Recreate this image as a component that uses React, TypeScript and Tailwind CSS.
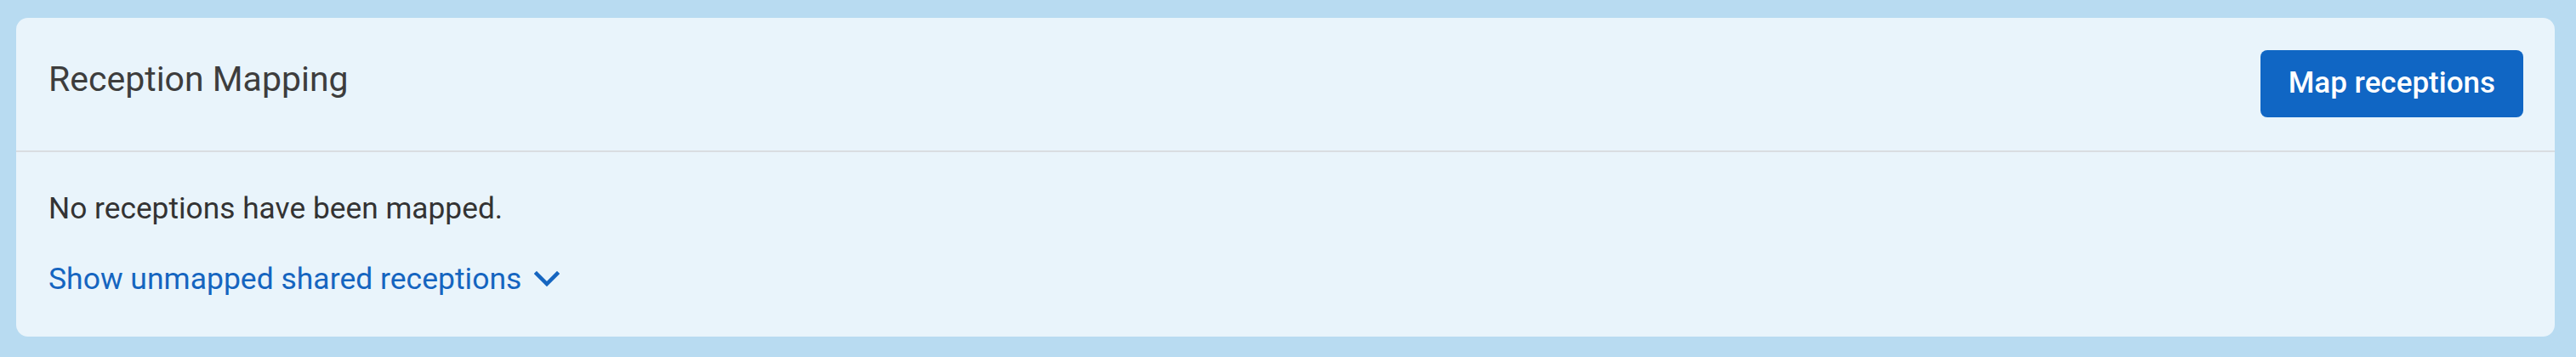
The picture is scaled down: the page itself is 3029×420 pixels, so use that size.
import React from "react";

export default function App() {
  return (
    <div
      className="h-[420px] bg-[#b8dbf1] pl-[19px] pr-[25px] pt-[21px] pb-[24px]"
      style={{ fontFamily: "Roboto, 'Noto Sans', sans-serif" }}
    >
      <div className="flex h-full flex-col rounded-[14px] bg-[#e9f4fb]">
        <div className="flex items-start justify-between border-b-2 border-[#d9dde1] pl-[38px] pr-[37px] pt-[38px] pb-[39px]">
          <h2 className="text-[41px] leading-[68px] font-normal text-[#3d3d3d]">
            Reception Mapping
          </h2>
          <button className="h-[79px] rounded-[8px] bg-[#1066c4] px-[33px] text-[35px] font-medium text-white">
            Map receptions
          </button>
        </div>
        <div className="flex flex-col items-start px-[38px] pt-[42px]">
          <p className="text-[35.3px] leading-[48px] text-[#333333]">
            No receptions have been mapped.
          </p>
          <button className="mt-[35px] flex items-center gap-[15px] text-[35.5px] leading-[48px] text-[#1565c0]">
            <span>Show unmapped shared receptions</span>
            <svg width="30" height="18" viewBox="0 0 30 18" fill="none">
              <polyline
                points="3,3 15,15 27,3"
                stroke="#1565c0"
                strokeWidth="4.5"
                strokeLinecap="square"
              />
            </svg>
          </button>
        </div>
      </div>
    </div>
  );
}
